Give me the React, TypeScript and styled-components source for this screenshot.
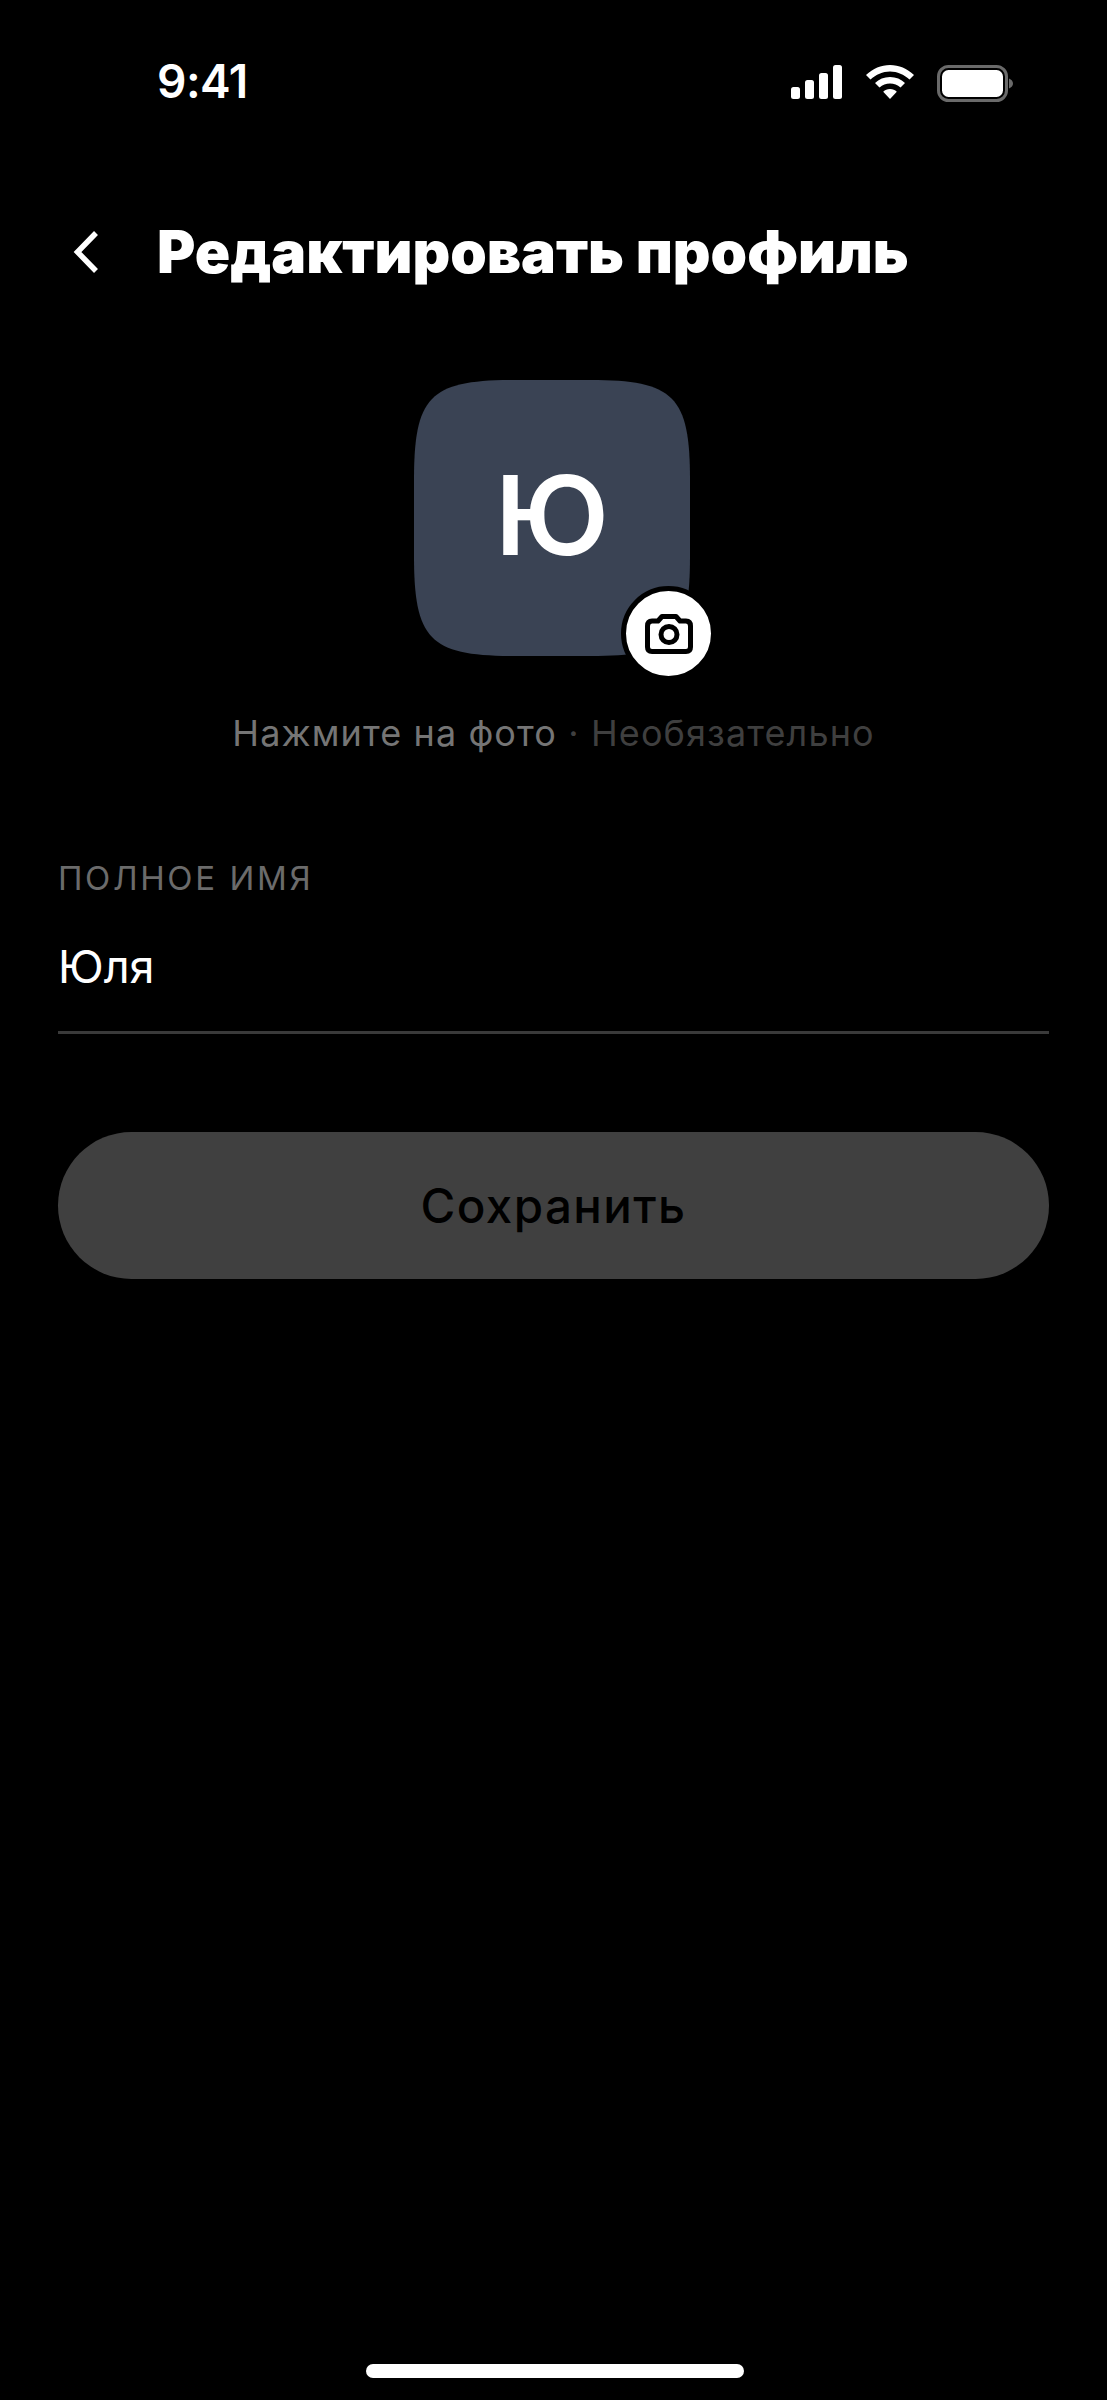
import styled, { createGlobalStyle } from "styled-components";

const GlobalStyle = createGlobalStyle`
  html, body { margin: 0; padding: 0; background: #000; }
  * { box-sizing: border-box; }
`;

const Screen = styled.div`
  width: 1107px;
  height: 2400px;
  background: #000;
  color: #fff;
  font-family: Inter, "Liberation Sans", sans-serif;
  display: flex;
  flex-direction: column;
`;

const StatusBar = styled.div`
  height: 204px;
  padding: 54px 94px 0 157px;
  display: flex;
  justify-content: space-between;
  align-items: flex-start;
`;

const Time = styled.span`
  font-size: 46px;
  font-weight: 600;
  line-height: 54px;
  letter-spacing: -0.5px;
`;

const StatusIcons = styled.div`
  display: flex;
  align-items: flex-start;
  gap: 23px;
  padding-top: 11px;
`;

const Header = styled.div`
  height: 96px;
  padding-left: 73px;
  display: flex;
  align-items: center;
  gap: 57px;
`;

const Title = styled.h1`
  margin: 0;
  font-size: 58.500px;
  font-weight: 900;
  line-height: 68px;
  letter-spacing: 0;
`;

const PhotoBlock = styled.div`
  margin-top: 80px;
  display: flex;
  flex-direction: column;
  align-items: center;
`;

const AvatarWrap = styled.div`
  position: relative;
  width: 276px;
  height: 276px;
  margin-right: 3px;
`;

const Avatar = styled.div`
  width: 276px;
  height: 276px;
  background: #3a4354;
  clip-path: path("M100 0H176C260 0 276 16 276 100V176C276 260 260 276 176 276H100C16 276 0 260 0 176V100C0 16 16 0 100 0Z");
  display: flex;
  align-items: center;
  justify-content: center;
  font-size: 110px;
  font-weight: 600;
  padding-bottom: 6px;
`;

const CameraBadge = styled.div`
  position: absolute;
  right: -26px;
  bottom: -25px;
  width: 95px;
  height: 95px;
  border-radius: 50%;
  background: #fff;
  border: 5px solid #000;
  display: flex;
  align-items: center;
  justify-content: center;
`;

const Hint = styled.div`
  margin-top: 54px;
  font-size: 36px;
  line-height: 46px;
  letter-spacing: 1.100px;
  color: #757575;
`;

const HintMuted = styled.span`
  color: #3f3f3f;
`;

const Field = styled.div`
  margin: 102px 58px 0;
  border-bottom: 3px solid #3a3a3a;
  height: 176px;
`;

const FieldLabel = styled.div`
  font-size: 33px;
  line-height: 40px;
  letter-spacing: 2.600px;
  color: #6b6b6b;
`;

const FieldValue = styled.div`
  margin-top: 43px;
  font-size: 45px;
  line-height: 52px;
  color: #fff;
`;

const SaveButton = styled.button`
  margin: 98px 58px 0;
  height: 147px;
  border: 0;
  border-radius: 74px;
  background: #404040;
  color: #000;
  font-family: inherit;
  font-size: 47.500px;
  font-weight: 500;
  letter-spacing: 1.400px;
`;

const HomeBar = styled.div`
  margin: auto auto 22px 366px;
  width: 378px;
  height: 14px;
  border-radius: 7px;
  background: #fff;
`;

export default function App() {
  return (
    <Screen>
      <GlobalStyle />
      <StatusBar>
        <Time>9:41</Time>
        <StatusIcons>
          <svg width="52" height="34" viewBox="0 0 52 34" fill="#fff">
            <rect x="0" y="22" width="9" height="12" rx="2.5" />
            <rect x="14" y="15" width="9" height="19" rx="2.5" />
            <rect x="28" y="8" width="9" height="26" rx="2.5" />
            <rect x="42" y="0" width="9" height="34" rx="2.5" />
          </svg>
          <svg width="48" height="34" viewBox="0 0 48 34" fill="#fff">
            <path d="M24 0C33 0 41 3.600 48 10L43.500 14.500C38 9.500 31.300 6.500 24 6.500C16.700 6.500 10 9.500 4.500 14.500L0 10C7 3.600 15 0 24 0Z" />
            <path d="M24 12C30 12 35 14.200 39 18L34.500 22.500C31.500 20 28 18.500 24 18.500C20 18.500 16.500 20 13.500 22.500L9 18C13 14.200 18 12 24 12Z" />
            <path d="M24 24C26.800 24 29 25 30.800 26.700L24 34L17.200 26.700C19 25 21.200 24 24 24Z" />
          </svg>
          <svg width="76" height="38" viewBox="0 0 76 38">
            <rect x="1.500" y="1.500" width="68" height="34" rx="10" fill="none" stroke="#6a6a6a" strokeWidth="3" />
            <rect x="5" y="5" width="61" height="27" rx="6.500" fill="#fff" />
            <path d="M72 13.500C74.500 14.500 76 16.200 76 18.500C76 20.800 74.500 22.500 72 23.500Z" fill="#6a6a6a" />
          </svg>
        </StatusIcons>
      </StatusBar>
      <Header>
        <svg width="27" height="44" viewBox="0 0 27 44" fill="none">
          <path d="M23 3L4.500 22L23 41" stroke="#fff" strokeWidth="5.500" />
        </svg>
        <Title>Редактировать профиль</Title>
      </Header>
      <PhotoBlock>
        <AvatarWrap>
          <Avatar>Ю</Avatar>
          <CameraBadge>
            <svg width="48" height="42" viewBox="0 0 48 42" fill="none" stroke="#000" strokeWidth="5" strokeLinejoin="round">
              <path d="M7 8H13L17 3.500H31L35 8H41C44 8 45.500 10 45.500 13V34C45.500 37 44 38.500 41 38.500H7C4 38.500 2.500 37 2.500 34V13C2.500 10 4 8 7 8Z" />
              <circle cx="24" cy="21.500" r="8" />
            </svg>
          </CameraBadge>
        </AvatarWrap>
        <Hint>
          Нажмите на фото <HintMuted>· Необязательно</HintMuted>
        </Hint>
      </PhotoBlock>
      <Field>
        <FieldLabel>ПОЛНОЕ ИМЯ</FieldLabel>
        <FieldValue>Юля</FieldValue>
      </Field>
      <SaveButton>Сохранить</SaveButton>
      <HomeBar />
    </Screen>
  );
}
